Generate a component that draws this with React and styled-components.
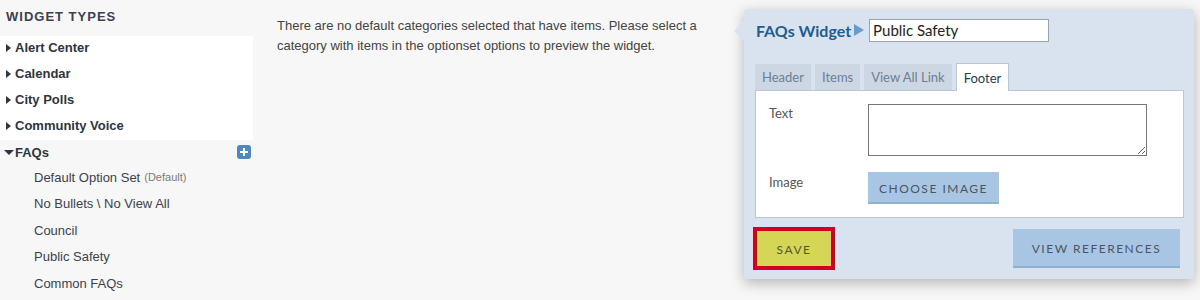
import styled, { createGlobalStyle } from "styled-components";

const GlobalStyle = createGlobalStyle`
  body {
    margin: 0;
    background: #f7f7f7;
    font-family: "Liberation Sans", Arial, sans-serif;
  }
`;

const Page = styled.div`
  display: flex;
  height: 300px;
  overflow: hidden;
`;

const Sidebar = styled.div`
  width: 253px;
  flex-shrink: 0;
`;

const SidebarTitle = styled.h2`
  margin: 0;
  height: 36px;
  padding: 9px 0 0 6px;
  box-sizing: border-box;
  font-size: 13px;
  font-weight: bold;
  letter-spacing: 1px;
  color: #3b4250;
`;

const TypeList = styled.div`
  background: #fff;
`;

const TypeRow = styled.div`
  display: flex;
  align-items: center;
  height: ${(p) => p.h || 26}px;
  padding: 0 0 ${(p) => (p.h ? 0 : 3)}px 5px;
  box-sizing: border-box;
  font-size: 13px;
  font-weight: bold;
  color: #2d3540;
  background: ${(p) => (p.open ? "transparent" : "#fff")};
`;

const ArrowRight = styled.span`
  width: 0;
  height: 0;
  border-top: 4px solid transparent;
  border-bottom: 4px solid transparent;
  border-left: 5px solid #2d3540;
  margin: 1px 4px 0 1px;
`;

const ArrowDown = styled.span`
  width: 0;
  height: 0;
  border-left: 5px solid transparent;
  border-right: 5px solid transparent;
  border-top: 5px solid #2d3540;
  margin: 0 1px 0 -1px;
`;

const TypeName = styled.span`
  flex: 1;
`;

const AddButton = styled.span`
  width: 14px;
  height: 14px;
  border-radius: 3px;
  background: #4f87bf;
  margin-right: 2px;
  display: flex;
  align-items: center;
  justify-content: center;
`;

const SubItem = styled.div`
  height: 26.5px;
  display: flex;
  align-items: center;
  padding-left: 34px;
  font-size: 13px;
  color: #3a4250;
`;

const Muted = styled.span`
  font-size: 11px;
  color: #7a7a7a;
  margin-left: 4px;
`;

const Middle = styled.div`
  width: 491px;
  flex-shrink: 0;
  box-sizing: border-box;
  padding: 16px 30px 0 24px;
  font-size: 13px;
  line-height: 20px;
  color: #444;
`;

const Panel = styled.div`
  position: relative;
  width: 450px;
  height: 270px;
  margin-top: 9px;
  box-sizing: border-box;
  background: #d9e3ef;
  border-radius: 3px;
  box-shadow: 0 4px 14px rgba(0, 0, 0, 0.28);
  padding: 10px 10px 0 11px;
  font-family: Lato, "Open Sans", sans-serif;
  display: flex;
  flex-direction: column;
`;

const Pointer = styled.span`
  position: absolute;
  left: -10px;
  top: 12px;
  width: 0;
  height: 0;
  border-top: 10px solid transparent;
  border-bottom: 10px solid transparent;
  border-right: 10px solid #d9e3ef;
`;

const TitleRow = styled.div`
  display: flex;
  align-items: center;
  height: 22px;
  padding-left: 1px;
`;

const Title = styled.span`
  font-size: 16px;
  font-weight: bold;
  color: #1f5c8f;
`;

const TitleArrow = styled.span`
  width: 0;
  height: 0;
  border-top: 6px solid transparent;
  border-bottom: 6px solid transparent;
  border-left: 10px solid #6a9cc9;
  margin: 0 5px 0 3px;
`;

const NameInput = styled.input`
  width: 180px;
  height: 23px;
  box-sizing: border-box;
  border: 1px solid #9aa3ad;
  padding: 0 3px;
  font-family: Lato, "Open Sans", sans-serif;
  font-size: 15px;
  color: #222;
  outline: none;
`;

const Tabs = styled.div`
  display: flex;
  align-items: flex-end;
  gap: 4px;
  margin-top: 21px;
  height: 28px;
  position: relative;
  z-index: 1;
`;

const Tab = styled.div`
  height: ${(p) => (p.active ? 28 : 26)}px;
  box-sizing: border-box;
  padding: 0 7px;
  display: flex;
  align-items: center;
  font-size: 13px;
  color: ${(p) => (p.active ? "#1f3a55" : "#6b7f94")};
  background: ${(p) => (p.active ? "#fff" : "#cdd7e4")};
  border: ${(p) => (p.active ? "1px solid #b8c6d6" : "none")};
  border-bottom: none;
  margin-bottom: ${(p) => (p.active ? -1 : 0)}px;
`;

const TabBody = styled.div`
  height: 128px;
  box-sizing: border-box;
  background: #fff;
  border: 1px solid #b8c6d6;
  padding: 13px 0 0 13px;
  display: flex;
  flex-direction: column;
  gap: 16px;
`;

const FieldRow = styled.div`
  display: flex;
  align-items: flex-start;
`;

const Label = styled.span`
  width: 99px;
  flex-shrink: 0;
  font-size: 13px;
  color: #555;
  padding-top: ${(p) => p.top || 0}px;
`;

const TextArea = styled.textarea`
  width: 279px;
  height: 52px;
  box-sizing: border-box;
  border: 1px solid #767676;
  margin: 0;
  resize: vertical;
`;

const FlatButton = styled.button`
  height: ${(p) => p.h}px;
  width: ${(p) => p.w}px;
  border: none;
  border-bottom: 2px solid #8fb0d0;
  background: #a8c6e3;
  color: #4a5563;
  font-family: Lato, "Open Sans", sans-serif;
  font-size: 12px;
  letter-spacing: 1.5px;
  text-transform: uppercase;
  padding: 2px 0 0;
  cursor: pointer;
`;

const Footer = styled.div`
  display: flex;
  align-items: center;
  justify-content: space-between;
  margin: 9px 4px 0 -2px;
`;

const SaveButton = styled.button`
  width: 82px;
  height: 43px;
  box-sizing: border-box;
  border: 4px solid #d0021b;
  background: #d5d655;
  color: #55553a;
  font-family: Lato, "Open Sans", sans-serif;
  font-size: 12px;
  letter-spacing: 1.5px;
  padding: 2px 0 0;
`;

const PlusIcon = () => (
  <svg width="10" height="10" viewBox="0 0 10 10">
    <path d="M5 1v8M1 5h8" stroke="#fff" strokeWidth="2" />
  </svg>
);

const types = ["Alert Center", "Calendar", "City Polls", "Community Voice"];
const optionSets = ["No Bullets \\ No View All", "Council", "Public Safety", "Common FAQs"];

export default function App() {
  return (
    <>
      <GlobalStyle />
      <Page>
        <Sidebar>
          <SidebarTitle>WIDGET TYPES</SidebarTitle>
          <TypeList>
            {types.map((t) => (
              <TypeRow key={t}>
                <ArrowRight />
                <TypeName>{t}</TypeName>
              </TypeRow>
            ))}
          </TypeList>
          <TypeRow open h={24}>
            <ArrowDown />
            <TypeName>FAQs</TypeName>
            <AddButton>
              <PlusIcon />
            </AddButton>
          </TypeRow>
          <SubItem>
            Default Option Set<Muted>(Default)</Muted>
          </SubItem>
          {optionSets.map((s) => (
            <SubItem key={s}>{s}</SubItem>
          ))}
        </Sidebar>
        <Middle>
          There are no default categories selected that have items. Please select a category with
          items in the optionset options to preview the widget.
        </Middle>
        <Panel>
          <Pointer />
          <TitleRow>
            <Title>FAQs Widget</Title>
            <TitleArrow />
            <NameInput defaultValue="Public Safety" />
          </TitleRow>
          <Tabs>
            <Tab>Header</Tab>
            <Tab>Items</Tab>
            <Tab>View All Link</Tab>
            <Tab active>Footer</Tab>
          </Tabs>
          <TabBody>
            <FieldRow>
              <Label top={1}>Text</Label>
              <TextArea />
            </FieldRow>
            <FieldRow>
              <Label top={2}>Image</Label>
              <FlatButton w={131} h={32}>Choose Image</FlatButton>
            </FieldRow>
          </TabBody>
          <Footer>
            <SaveButton>SAVE</SaveButton>
            <FlatButton w={167} h={39}>View References</FlatButton>
          </Footer>
        </Panel>
      </Page>
    </>
  );
}
